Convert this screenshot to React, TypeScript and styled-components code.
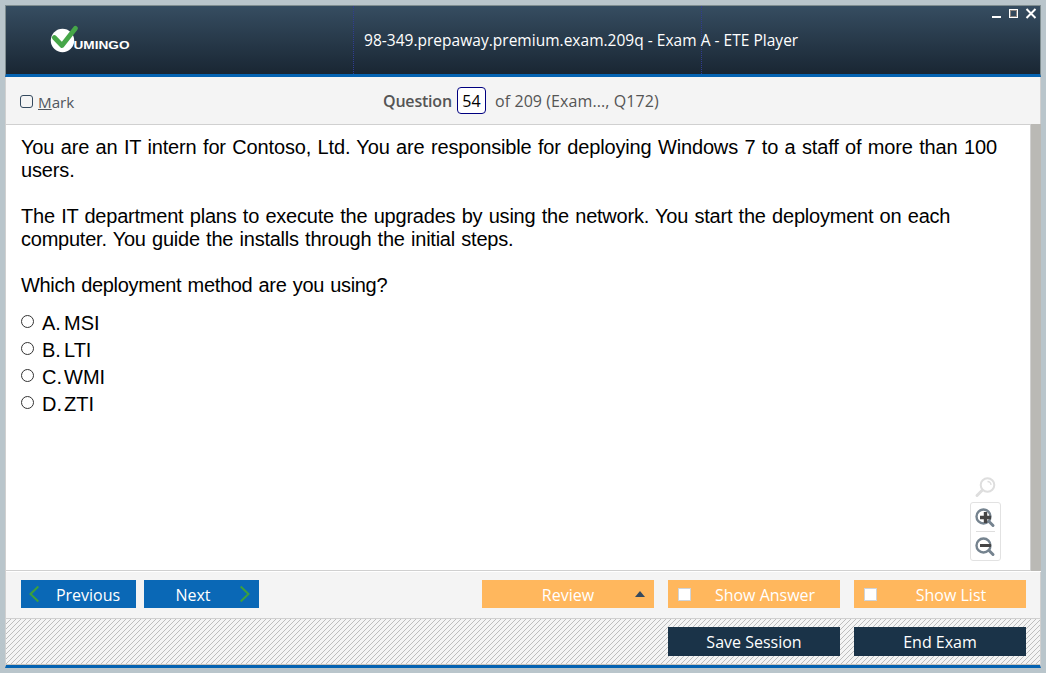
import React from "react";
import styled, { createGlobalStyle, css } from "styled-components";

const uiFont = `"Open Sans", "Noto Sans", sans-serif`;
const docFont = `"Liberation Sans", Arial, sans-serif`;

const GlobalStyle = createGlobalStyle`
  *, *::before, *::after { box-sizing: border-box; }
  html, body { margin: 0; padding: 0; }
  body { background: #b9c5cb; overflow: hidden; }
  button { margin: 0; padding: 0; border: 0; background: none; font: inherit; color: inherit; }
`;

const Desktop = styled.div`
  width: 1046px;
  height: 673px;
  padding: 5px;
  background: #b9c5cb;
  font-family: ${uiFont};
`;

const Window = styled.div`
  width: 1036px;
  height: 663px;
  display: flex;
  flex-direction: column;
`;

const Header = styled.header`
  height: 72px;
  flex: none;
  position: relative;
  display: grid;
  grid-template-columns: 348px 348px 1fr;
  background: linear-gradient(#364d61, #192633) padding-box;
  border: 1px solid #7f8d90;
  border-bottom: 3px solid #0463b2;
`;

const HeaderCell = styled.div<{ $divided?: boolean }>`
  display: flex;
  ${(p) => p.$divided && css`border-right: 1px dotted #303c92;`}
`;

const LogoMark = styled.svg`
  display: block;
  margin: 18px 0 0 43px;
`;

const Title = styled.h1`
  margin: 0;
  padding: 23px 0 0 10px;
  font-size: 15.5px;
  line-height: 22px;
  font-weight: 500;
  letter-spacing: 0.02px;
  color: #fff;
  white-space: nowrap;
`;

const WindowControls = styled.svg`
  position: absolute;
  top: 2px;
  right: 3px;
`;

const InfoBar = styled.div`
  height: 48px;
  flex: none;
  display: grid;
  grid-template-columns: 362px 1fr;
  background: #f4f4f4;
  border: solid #d0d0d0;
  border-width: 0 1px 1px;
  color: #555;
`;

const Mark = styled.label`
  display: flex;
  padding: 14px 0 0 14px;
  font-size: 15.2px;
  line-height: 23px;
  color: #50565e;
`;

const MarkBox = styled.span`
  width: 13px;
  height: 13px;
  margin: 4px 5px 0 0;
  border: 1px solid #34495e;
  border-radius: 3px;
`;

const Counter = styled.div`
  display: flex;
  padding: 10px 0 0 15px;
  font-size: 16px;
  line-height: 28px;
  white-space: nowrap;
`;

const CounterLabel = styled.b`
  width: 74px;
  font-weight: 600;
  letter-spacing: -0.2px;
`;

const CounterBox = styled.span`
  width: 29px;
  height: 27px;
  border: 1px solid #000080;
  border-radius: 4px;
  background: #fff;
  color: #000;
  text-align: center;
  line-height: 27px;
`;

const CounterTotal = styled.span`
  margin-left: 9px;
  letter-spacing: 0.08px;
`;

const Content = styled.main`
  height: 447px;
  flex: none;
  display: flex;
  border-left: 1px solid #d0d0d0;
  background: #fff;
  position: relative;
`;

const Document = styled.section`
  flex: 1;
  height: 446px;
  padding: 11px 0 0 15px;
  border: solid #d0d0d0;
  border-width: 0 1px 1px 0;
  font-family: ${docFont};
  font-size: 20px;
  line-height: 23px;
  color: #000;
`;

const Scrollbar = styled.div`
  width: 10px;
  height: 447px;
  margin-top: -1px;
  background: #bab9b5;
`;

const Line = styled.div<{ $spacing: number }>`
  height: 23px;
  white-space: nowrap;
  word-spacing: 1px;
  letter-spacing: ${(p) => p.$spacing}px;
`;

const Paragraph = styled.div`
  margin-bottom: 23px;
`;

const Options = styled.div`
  margin-top: -11px;
  display: flex;
  flex-direction: column;
`;

const Option = styled.label`
  height: 27px;
  display: flex;
  line-height: 28px;
`;

const Radio = styled.span`
  width: 13px;
  height: 13px;
  margin: 6px 8px 0 0;
  border: 1px solid #333;
  border-radius: 50%;
`;

const Letter = styled.span`
  width: 22px;
`;

const ZoomTools = styled.svg`
  position: absolute;
  right: 39px;
  top: 350px;
`;

const Toolbar = styled.div`
  height: 47px;
  flex: none;
  display: flex;
  padding: 8px 14px 0 15px;
  background: #f4f4f4;
  border: solid #d0d0d0;
  border-width: 0 1px 1px;
`;

const Footer = styled.footer`
  height: 49px;
  flex: none;
  display: flex;
  justify-content: flex-end;
  gap: 14px;
  padding: 8px 14px 0;
  border: solid #d0d0d0;
  border-width: 0 1px;
  border-bottom: 3px solid #0463b2;
  position: relative;
`;

const Hatch = styled.svg`
  position: absolute;
  inset: 0;
  width: 100%;
  height: 46px;
`;

const tones = { blue: "#0a68b6", orange: "#ffb75d", navy: "#1a3348" };

const Action = styled.button<{ $tone: keyof typeof tones; $before?: number; $after?: number }>`
  position: relative;
  width: ${(p) => (p.$tone === "blue" ? 115 : 172)}px;
  height: ${(p) => (p.$tone === "navy" ? 29 : 28)}px;
  padding: 0 ${(p) => p.$after ?? 0}px 0 ${(p) => p.$before ?? 0}px;
  background: ${(p) => tones[p.$tone]};
  color: #fff;
  font-size: 16px;
  line-height: ${(p) => (p.$tone === "navy" ? 28 : 30)}px;
  text-align: center;
  white-space: nowrap;
`;

const ActionGroup = styled.div<{ $gap: number; $end?: boolean }>`
  display: flex;
  gap: ${(p) => p.$gap}px;
  margin-left: ${(p) => (p.$end ? "auto" : "0")};
`;

const ActionIcon = styled.svg<{ $side: "left" | "right"; $inset: number }>`
  position: absolute;
  top: 5px;
  ${(p) => p.$side}: ${(p) => p.$inset}px;
`;

const CheckSquare = styled.span`
  position: absolute;
  left: 10px;
  top: 8px;
  width: 13px;
  height: 13px;
  border: 1px solid #cfd3d8;
  background: #fff;
`;

const question = [
  [
    { text: "You are an IT intern for Contoso, Ltd. You are responsible for deploying Windows 7 to a staff of more than 100", spacing: -0.15 },
    { text: "users.", spacing: -0.15 },
  ],
  [
    { text: "The IT department plans to execute the upgrades by using the network. You start the deployment on each", spacing: -0.22 },
    { text: "computer. You guide the installs through the initial steps.", spacing: -0.235 },
  ],
  [{ text: "Which deployment method are you using?", spacing: -0.325 }],
];

const options = [
  ["A.", "MSI"],
  ["B.", "LTI"],
  ["C.", "WMI"],
  ["D.", "ZTI"],
];

const Logo = () => (
  <LogoMark width="84" height="32" viewBox="0 0 84 32">
    <circle cx="13.5" cy="16.5" r="11.7" fill="#fff" />
    <path d="M5.3 13.5 L13 21.5 L26.5 4.3" fill="none" stroke="#46a648" strokeWidth="4.8" strokeLinecap="round" strokeLinejoin="round" />
    <text x="24.5" y="25" fill="#fff" fontFamily="Liberation Sans, Arial, sans-serif" fontWeight="700" fontSize="10.8" textLength="56" lengthAdjust="spacingAndGlyphs">UMINGO</text>
  </LogoMark>
);

export default function App() {
  return (
    <Desktop>
      <GlobalStyle />
      <Window>
        <Header>
          <HeaderCell $divided><Logo /></HeaderCell>
          <HeaderCell $divided><Title>98-349.prepaway.premium.exam.209q - Exam A - ETE Player</Title></HeaderCell>
          <HeaderCell />
          <WindowControls width="46" height="12" viewBox="0 0 46 12">
            <path d="M1 8h9v2H1z" fill="#fff" />
            <rect x="18.5" y="1.5" width="8" height="8" fill="none" stroke="#fff" />
            <rect x="19.5" y="2.5" width="6" height="6" fill="none" stroke="#8d8580" />
            <path d="M35.5 1 L44.5 10 M44.5 1 L35.5 10" stroke="#fff" strokeWidth="2" />
          </WindowControls>
        </Header>
        <InfoBar>
          <Mark><MarkBox /><span><u>M</u>ark</span></Mark>
          <Counter>
            <CounterLabel>Question</CounterLabel>
            <CounterBox>54</CounterBox>
            <CounterTotal>of 209 (Exam..., Q172)</CounterTotal>
          </Counter>
        </InfoBar>
        <Content>
          <Document>
            {question.map((lines, i) => (
              <Paragraph key={i}>
                {lines.map((l) => <Line key={l.text} $spacing={l.spacing}>{l.text}</Line>)}
              </Paragraph>
            ))}
            <Options>
              {options.map(([letter, text]) => (
                <Option key={letter}><Radio /><Letter>{letter}</Letter><span>{text}</span></Option>
              ))}
            </Options>
          </Document>
          <Scrollbar />
          <ZoomTools width="32" height="88" viewBox="0 0 32 88" fill="none">
            <circle cx="17.5" cy="10" r="6.8" stroke="#dedede" strokeWidth="2" />
            <path d="M17.5 6.5a3.5 3.5 0 0 1 3.5 3.5" stroke="#dedede" strokeWidth="1.3" />
            <path d="M12 15.5L7 20.5" stroke="#dedede" strokeWidth="3" strokeLinecap="round" />
            <rect x="0.5" y="27.5" width="30" height="58" rx="2.5" fill="#fff" stroke="#e2e2e2" />
            <path d="M6 56.5h19" stroke="#dedede" />
            <circle cx="13.5" cy="41.5" r="7" stroke="#75838f" strokeWidth="2.4" />
            <path d="M19 46.5l4 4" stroke="#75838f" strokeWidth="3" strokeLinecap="round" />
            <path d="M10 42.5h11M15.5 37v11" stroke="#454545" strokeWidth="3.4" />
            <circle cx="13.5" cy="70.5" r="7" stroke="#75838f" strokeWidth="2.4" />
            <path d="M19 75.5l4 4" stroke="#75838f" strokeWidth="3" strokeLinecap="round" />
            <path d="M10 70.5h11" stroke="#454545" strokeWidth="3" />
          </ZoomTools>
        </Content>
        <Toolbar>
          <ActionGroup $gap={8}>
            <Action $tone="blue" $before={19}>
              <ActionIcon $side="left" $inset={8} width="10" height="18"><path d="M9.3 1.5L1.5 9L9.3 16.5" fill="none" stroke="#3da03c" strokeWidth="2" /></ActionIcon>
              Previous
            </Action>
            <Action $tone="blue" $after={17}>
              <ActionIcon $side="right" $inset={9} width="10" height="18"><path d="M0.7 1.5L8.5 9L0.7 16.5" fill="none" stroke="#3da03c" strokeWidth="2" /></ActionIcon>
              Next
            </Action>
          </ActionGroup>
          <ActionGroup $gap={14} $end>
            <Action $tone="orange">
              Review
              <ActionIcon $side="right" $inset={8} width="12" height="18"><path d="M1 12L6 6L11 12z" fill="#34495e" /></ActionIcon>
            </Action>
            <Action $tone="orange" $before={22}><CheckSquare />Show Answer</Action>
            <Action $tone="orange" $before={22}><CheckSquare />Show List</Action>
          </ActionGroup>
        </Toolbar>
        <Footer>
          <Hatch>
            <defs>
              <pattern id="hatch" width="5" height="5" patternUnits="userSpaceOnUse">
                <rect width="5" height="5" fill="#f4f4f4" />
                <path d="M4 0h1v1h-1zM3 1h1v1h-1zM2 2h1v1h-1zM1 3h1v1h-1zM0 4h1v1h-1z" fill="#bdbdbd" />
              </pattern>
            </defs>
            <rect width="100%" height="46" fill="url(#hatch)" />
            <rect y="45" width="100%" height="1" fill="#c8c4be" />
          </Hatch>
          <Action $tone="navy">Save Session</Action>
          <Action $tone="navy">End Exam</Action>
        </Footer>
      </Window>
    </Desktop>
  );
}
